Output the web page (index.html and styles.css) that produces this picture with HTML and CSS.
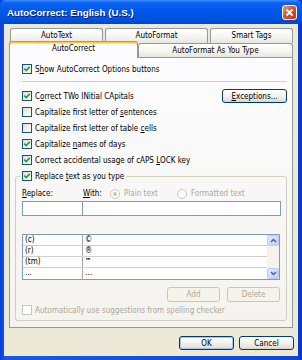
FILE: index.html
```html
<!doctype html>
<html>
	<head>
		<link rel="stylesheet" href="styles.css">
	</head>
	<body>
		<div class="window">
			<div class="titlebar">
				<span class="title">AutoCorrect: English (U.S.)</span>
				<span class="close"><svg viewBox="0 0 13 13" width="13" height="13"><path d="M3.5 3.5l6 6M9.5 3.5l-6 6" stroke="#fff" stroke-width="1.8"/></svg></span>
			</div>
			<div class="client">
				<div class="tabrow back">
					<div class="tab t-text">AutoText</div>
					<div class="tab t-format">AutoFormat</div>
					<div class="tab fill">Smart Tags</div>
				</div>
				<div class="tabrow front">
					<div class="tab selected">AutoCorrect</div>
					<div class="tab fill">AutoFormat As You Type</div>
				</div>
				<div class="panel">
					<div class="check-row">
						<span class="cb"><svg viewBox="0 0 8 8" width="8" height="8"><path d="M1.3 3.6l1.9 1.9 3.5-3.6" fill="none" stroke="#21a121" stroke-width="1.6"/></svg></span>
						<span>S<u>h</u>ow AutoCorrect Options buttons</span>
					</div>
					<div class="sep"></div>
					<div class="check-row">
						<span class="cb"><svg viewBox="0 0 8 8" width="8" height="8"><path d="M1.3 3.6l1.9 1.9 3.5-3.6" fill="none" stroke="#21a121" stroke-width="1.6"/></svg></span>
						<span>C<u>o</u>rrect TWo INitial CApitals</span>
						<button class="btn exceptions"><u>E</u>xceptions...</button>
					</div>
					<div class="check-row">
						<span class="cb"></span>
						<span>Capitalize first letter of <u>s</u>entences</span>
					</div>
					<div class="check-row">
						<span class="cb"></span>
						<span>Capitalize first letter of table <u>c</u>ells</span>
					</div>
					<div class="check-row">
						<span class="cb"><svg viewBox="0 0 8 8" width="8" height="8"><path d="M1.3 3.6l1.9 1.9 3.5-3.6" fill="none" stroke="#21a121" stroke-width="1.6"/></svg></span>
						<span>Capitalize <u>n</u>ames of days</span>
					</div>
					<div class="check-row">
						<span class="cb"><svg viewBox="0 0 8 8" width="8" height="8"><path d="M1.3 3.6l1.9 1.9 3.5-3.6" fill="none" stroke="#21a121" stroke-width="1.6"/></svg></span>
						<span>Correct accidental usage of cAPS <u>L</u>OCK key</span>
					</div>
					<fieldset class="group">
						<legend class="check-row">
							<span class="cb"><svg viewBox="0 0 8 8" width="8" height="8"><path d="M1.3 3.6l1.9 1.9 3.5-3.6" fill="none" stroke="#21a121" stroke-width="1.6"/></svg></span>
							<span>Replace <u>t</u>ext as you type</span>
						</legend>
						<div class="labels">
							<span class="lab-replace"><u>R</u>eplace:</span>
							<span class="lab-with"><u>W</u>ith:</span>
							<span class="radio plain"><span class="rb on"></span><span class="dim">Plain text</span></span>
							<span class="radio"><span class="rb"></span><span class="dim">Formatted text</span></span>
						</div>
						<div class="inputs">
							<div class="field replace"></div>
							<div class="field with"></div>
						</div>
						<div class="list">
							<div class="rows">
								<div class="lrow"><span>(c)</span><span>©</span></div>
								<div class="lrow"><span>(r)</span><span>®</span></div>
								<div class="lrow"><span>(tm)</span><span class="tm">™</span></div>
								<div class="lrow"><span>...</span><span>…</span></div>
							</div>
							<div class="sbar">
								<span class="arrow"><svg viewBox="0 0 7 5" width="7" height="5"><path d="M1 4l2.5-2.5L6 4" fill="none" stroke="#4d6185" stroke-width="1.4"/></svg></span>
								<span class="arrow"><svg viewBox="0 0 7 5" width="7" height="5"><path d="M1 1l2.5 2.5L6 1" fill="none" stroke="#4d6185" stroke-width="1.4"/></svg></span>
							</div>
						</div>
						<div class="btnrow">
							<button class="btn" disabled>Add</button>
							<button class="btn" disabled>Delete</button>
						</div>
						<div class="check-row disabled">
							<span class="cb"></span>
							<span>Automatically use suggestions from spelling checker</span>
						</div>
					</fieldset>
				</div>
				<div class="footer">
					<button class="btn default">OK</button>
					<button class="btn">Cancel</button>
				</div>
			</div>
		</div>
	</body>
</html>
```

FILE: styles.css
```css
*
{
	box-sizing: border-box;
}

body
{
	margin: 0;
	background: #0831d9;
	font-family: "DejaVu Sans Condensed", "Liberation Sans", sans-serif;
	font-size: 8px;
	color: #000000;
}

.window
{
	width: 302px;
	height: 360px;
	display: flex;
	flex-direction: column;
	background: linear-gradient(90deg, #0a3fd8, #1658e8 2%, #0b47dc 98%, #0831c4);
}

.titlebar
{
	height: 24px;
	display: flex;
	align-items: center;
	justify-content: space-between;
	padding: 0 5px 0 7px;
	border-radius: 6px 6px 0 0;
	background: linear-gradient(#3d8eff, #0a62f2 12%, #0058e8 45%, #0053e0 80%, #0046c8);
}

.title
{
	font-family: "Liberation Sans", sans-serif;
	font-weight: bold;
	font-size: 9.8px;
	color: #ffffff;
	text-shadow: 1px 1px #0a1e6e;
}

.close
{
	width: 15px;
	height: 15px;
	display: flex;
	align-items: center;
	justify-content: center;
	border: 1px solid #ffffff;
	border-radius: 3px;
	background: linear-gradient(135deg, #f09a7c, #e0532f 45%, #c3391a);
}

.client
{
	flex: 1;
	margin: 0 4px 4px;
	padding: 4px 5px 0;
	background: #ece9d8;
	display: flex;
	flex-direction: column;
}

.tabrow
{
	display: flex;
}

.tabrow.back
{
	padding-left: 1px;
	gap: 2px;
}

.tabrow.front
{
	margin-top: -2px;
	height: 16px;
	align-items: flex-end;
	position: relative;
	z-index: 1;
}

.tab
{
	display: flex;
	align-items: center;
	justify-content: center;
	border: 1px solid #919b9c;
	border-bottom: 0;
	border-radius: 3px 3px 0 0;
	background: linear-gradient(#ffffff, #f4f4f0 60%, #e6e5de);
}

.back .tab
{
	height: 15px;
	padding-bottom: 1px;
}

.front .tab
{
	height: 14px;
}

.t-text
{
	width: 93px;
}

.t-format
{
	width: 103px;
}

.fill
{
	flex: 1;
}

.front .tab.selected
{
	width: 129px;
	height: 17px;
	margin-bottom: -1px;
	padding-bottom: 3px;
	border-top: 1px solid #e68b2c;
	background: #fcfcfe;
	box-shadow: inset 0 1px 0 #ffc73c, inset 0 2px 0 #ffe29a;
}

.panel
{
	height: 271px;
	border: 1px solid #919b9c;
	background: linear-gradient(#fcfcfe, #f4f3ee);
	padding: 3px 5px 0 12px;
}

.check-row
{
	display: flex;
	align-items: center;
	gap: 3px;
	height: 16px;
}

.cb
{
	width: 10px;
	height: 10px;
	flex: none;
	display: flex;
	align-items: center;
	justify-content: center;
	border: 1px solid #1c5180;
	background: linear-gradient(135deg, #dcdcd7, #ffffff);
}

.disabled
{
	color: #aca899;
}

.disabled .cb
{
	border-color: #cac8bb;
	background: #ffffff;
}

.sep
{
	margin: 4px 0 6px;
	border-top: 1px solid #d0d0bf;
}

.btn
{
	font: inherit;
	color: #000000;
	height: 14px;
	padding: 0;
	border: 1px solid #003c74;
	border-radius: 3px;
	background: linear-gradient(#ffffff, #f5f4f0 40%, #e6e3d9 85%, #d6d0c5);
}

.btn:disabled
{
	border-color: #c9c7ba;
	background: #f5f4ea;
	color: #aca899;
}

.exceptions
{
	margin-left: auto;
	width: 65px;
}

.group
{
	margin: 0 0 0 -7px;
	padding: 0 5px 2px 6px;
	min-width: 0;
	border: 1px solid #d0d0bf;
	border-radius: 3px;
}

.group legend
{
	margin-left: -2px;
	padding: 0 2px;
}

.labels
{
	display: flex;
	align-items: center;
	height: 15px;
	margin-top: 2px;
}

.lab-replace
{
	width: 61px;
}

.lab-with
{
	width: 27px;
}

.radio
{
	display: flex;
	align-items: center;
	gap: 4px;
}

.radio.plain
{
	width: 67px;
}

.dim
{
	color: #aca899;
}

.rb
{
	width: 10px;
	height: 10px;
	border: 1px solid #cac8bb;
	border-radius: 50%;
	background: #ffffff;
	display: flex;
	align-items: center;
	justify-content: center;
}

.rb.on::after
{
	content: "";
	width: 4px;
	height: 4px;
	border-radius: 50%;
	background: #cac8bb;
}

.inputs
{
	display: flex;
	height: 15px;
}

.field
{
	border: 1px solid #7f9db9;
	background: #ffffff;
}

.field.replace
{
	width: 61px;
}

.field.with
{
	flex: 1;
	margin-left: -1px;
}

.list
{
	display: flex;
	height: 46px;
	margin: 18px 1px 0 0;
	border: 1px solid #7f9db9;
	background: #ffffff;
}

.rows
{
	flex: 1;
}

.lrow
{
	display: grid;
	grid-template-columns: 60px 1fr;
	height: 11px;
	line-height: 10px;
	border-bottom: 1px solid #d4d0c8;
}

.lrow:last-child
{
	border-bottom: 0;
}

.lrow span
{
	padding-left: 2px;
}

.lrow span:first-child
{
	border-right: 1px solid #aca899;
}

.tm
{
	font-size: 7px;
	font-weight: bold;
	line-height: 8px;
}

.sbar
{
	width: 12px;
	display: flex;
	flex-direction: column;
	justify-content: space-between;
	background: #f4f3ee;
}

.arrow
{
	height: 11px;
	display: flex;
	align-items: center;
	justify-content: center;
	border: 1px solid #b8cbf4;
	border-radius: 2px;
	background: linear-gradient(135deg, #e2eafe, #bccff9);
}

.btnrow
{
	display: flex;
	justify-content: flex-end;
	gap: 7px;
	margin: 7px 1px 0 0;
}

.btnrow .btn
{
	width: 53px;
	height: 15px;
}

.footer
{
	display: flex;
	justify-content: flex-end;
	gap: 5px;
	margin: 8px -1px 0 0;
}

.footer .btn
{
	width: 55px;
}

.btn.default
{
	box-shadow: inset 0 0 0 1px #a9c3f2;
}
```
